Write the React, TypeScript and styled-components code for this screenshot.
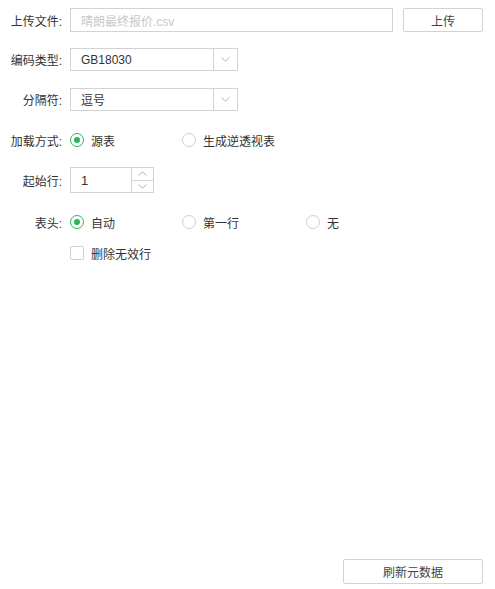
import React from "react";
import styled, { createGlobalStyle } from "styled-components";

const GlobalStyle = createGlobalStyle`
  html, body {
    margin: 0;
    padding: 0;
    background: #fff;
  }
  body {
    font-family: "Liberation Sans", "Noto Sans CJK SC", sans-serif;
    font-size: 12px;
    color: #333;
  }
`;

const Page = styled.div`
  height: 100vh;
  box-sizing: border-box;
  padding: 8px 12px 5px 8px;
  display: flex;
  flex-direction: column;
`;

const Row = styled.div<{ $height: number; $top: number }>`
  display: flex;
  align-items: center;
  height: ${({ $height }) => $height}px;
  margin-top: ${({ $top }) => $top}px;
`;

const Label = styled.label`
  width: 54px;
  margin-right: 8px;
  text-align: right;
  white-space: nowrap;
  color: #333;
`;

const TextInput = styled.div`
  box-sizing: border-box;
  width: 323px;
  height: 100%;
  border: 1px solid #d3d3d3;
  padding-left: 10px;
  display: flex;
  align-items: center;
  color: #c8c8c8;
`;

const Button = styled.button<{ $width: number }>`
  box-sizing: border-box;
  width: ${({ $width }) => $width}px;
  height: 100%;
  border: 1px solid #d3d3d3;
  border-radius: 2px;
  background: #fff;
  font: inherit;
  color: #444;
  padding: 0;
`;

const UploadButton = styled(Button)`
  margin-left: 10px;
`;

const Select = styled.div`
  box-sizing: border-box;
  width: 168px;
  height: 100%;
  border: 1px solid #d3d3d3;
  display: flex;
  align-items: stretch;
`;

const SelectValue = styled.div`
  flex: 1;
  padding-left: 10px;
  display: flex;
  align-items: center;
  color: #333;
`;

const SelectArrow = styled.div`
  width: 23px;
  border-left: 1px solid #d3d3d3;
  display: flex;
  align-items: center;
  justify-content: center;
`;

const Option = styled.div<{ $width?: number }>`
  display: flex;
  align-items: center;
  width: ${({ $width }) => ($width ? `${$width}px` : "auto")};
`;

const Radio = styled.span<{ $checked?: boolean }>`
  box-sizing: border-box;
  width: 14px;
  height: 14px;
  border-radius: 50%;
  border: 1px solid ${({ $checked }) => ($checked ? "#2bb55c" : "#cfcfcf")};
  margin-right: 7px;
  display: flex;
  align-items: center;
  justify-content: center;
  &::after {
    content: "";
    display: ${({ $checked }) => ($checked ? "block" : "none")};
    width: 6px;
    height: 6px;
    border-radius: 50%;
    background: #2bb55c;
  }
`;

const Checkbox = styled.span`
  box-sizing: border-box;
  width: 14px;
  height: 14px;
  border: 1px solid #cfcfcf;
  border-radius: 2px;
  margin-right: 7px;
`;

const Spinner = styled.div`
  box-sizing: border-box;
  width: 84px;
  height: 100%;
  border: 1px solid #d3d3d3;
  display: flex;
`;

const SpinnerValue = styled.div`
  flex: 1;
  padding-left: 10px;
  display: flex;
  align-items: center;
  font-size: 13px;
  color: #333;
`;

const SpinnerButtons = styled.div`
  width: 21px;
  border-left: 1px solid #d3d3d3;
  display: flex;
  flex-direction: column;
`;

const SpinnerButton = styled.div<{ $last?: boolean }>`
  flex: 1;
  display: flex;
  align-items: center;
  justify-content: center;
  border-top: ${({ $last }) => ($last ? "1px solid #d3d3d3" : "none")};
`;

const Footer = styled.div`
  margin-top: auto;
  display: flex;
  justify-content: flex-end;
  height: 25px;
`;

const Chevron = ({ up }: { up?: boolean }) => (
  <svg width="9" height="5" viewBox="0 0 9 5">
    <path
      d={up ? "M0.5 4.5 L4.5 0.8 L8.5 4.5" : "M0.5 0.5 L4.5 4.2 L8.5 0.5"}
      fill="none"
      stroke="#b5b5b5"
      strokeWidth="1"
    />
  </svg>
);

export default function App() {
  return (
    <Page>
      <GlobalStyle />
      <Row $height={24} $top={0}>
        <Label>上传文件:</Label>
        <TextInput>晴朗最终报价.csv</TextInput>
        <UploadButton $width={80}>上传</UploadButton>
      </Row>
      <Row $height={23} $top={16}>
        <Label>编码类型:</Label>
        <Select>
          <SelectValue>GB18030</SelectValue>
          <SelectArrow>
            <Chevron />
          </SelectArrow>
        </Select>
      </Row>
      <Row $height={23} $top={17}>
        <Label>分隔符:</Label>
        <Select>
          <SelectValue>逗号</SelectValue>
          <SelectArrow>
            <Chevron />
          </SelectArrow>
        </Select>
      </Row>
      <Row $height={24} $top={17}>
        <Label>加载方式:</Label>
        <Option $width={112}>
          <Radio $checked />
          源表
        </Option>
        <Option>
          <Radio />
          生成逆透视表
        </Option>
      </Row>
      <Row $height={26} $top={15}>
        <Label>起始行:</Label>
        <Spinner>
          <SpinnerValue>1</SpinnerValue>
          <SpinnerButtons>
            <SpinnerButton>
              <Chevron up />
            </SpinnerButton>
            <SpinnerButton $last>
              <Chevron />
            </SpinnerButton>
          </SpinnerButtons>
        </Spinner>
      </Row>
      <Row $height={24} $top={17}>
        <Label>表头:</Label>
        <Option $width={112}>
          <Radio $checked />
          自动
        </Option>
        <Option $width={124}>
          <Radio />
          第一行
        </Option>
        <Option>
          <Radio />
          无
        </Option>
      </Row>
      <Row $height={24} $top={7}>
        <Label />
        <Option>
          <Checkbox />
          删除无效行
        </Option>
      </Row>
      <Footer>
        <Button $width={140}>刷新元数据</Button>
      </Footer>
    </Page>
  );
}
